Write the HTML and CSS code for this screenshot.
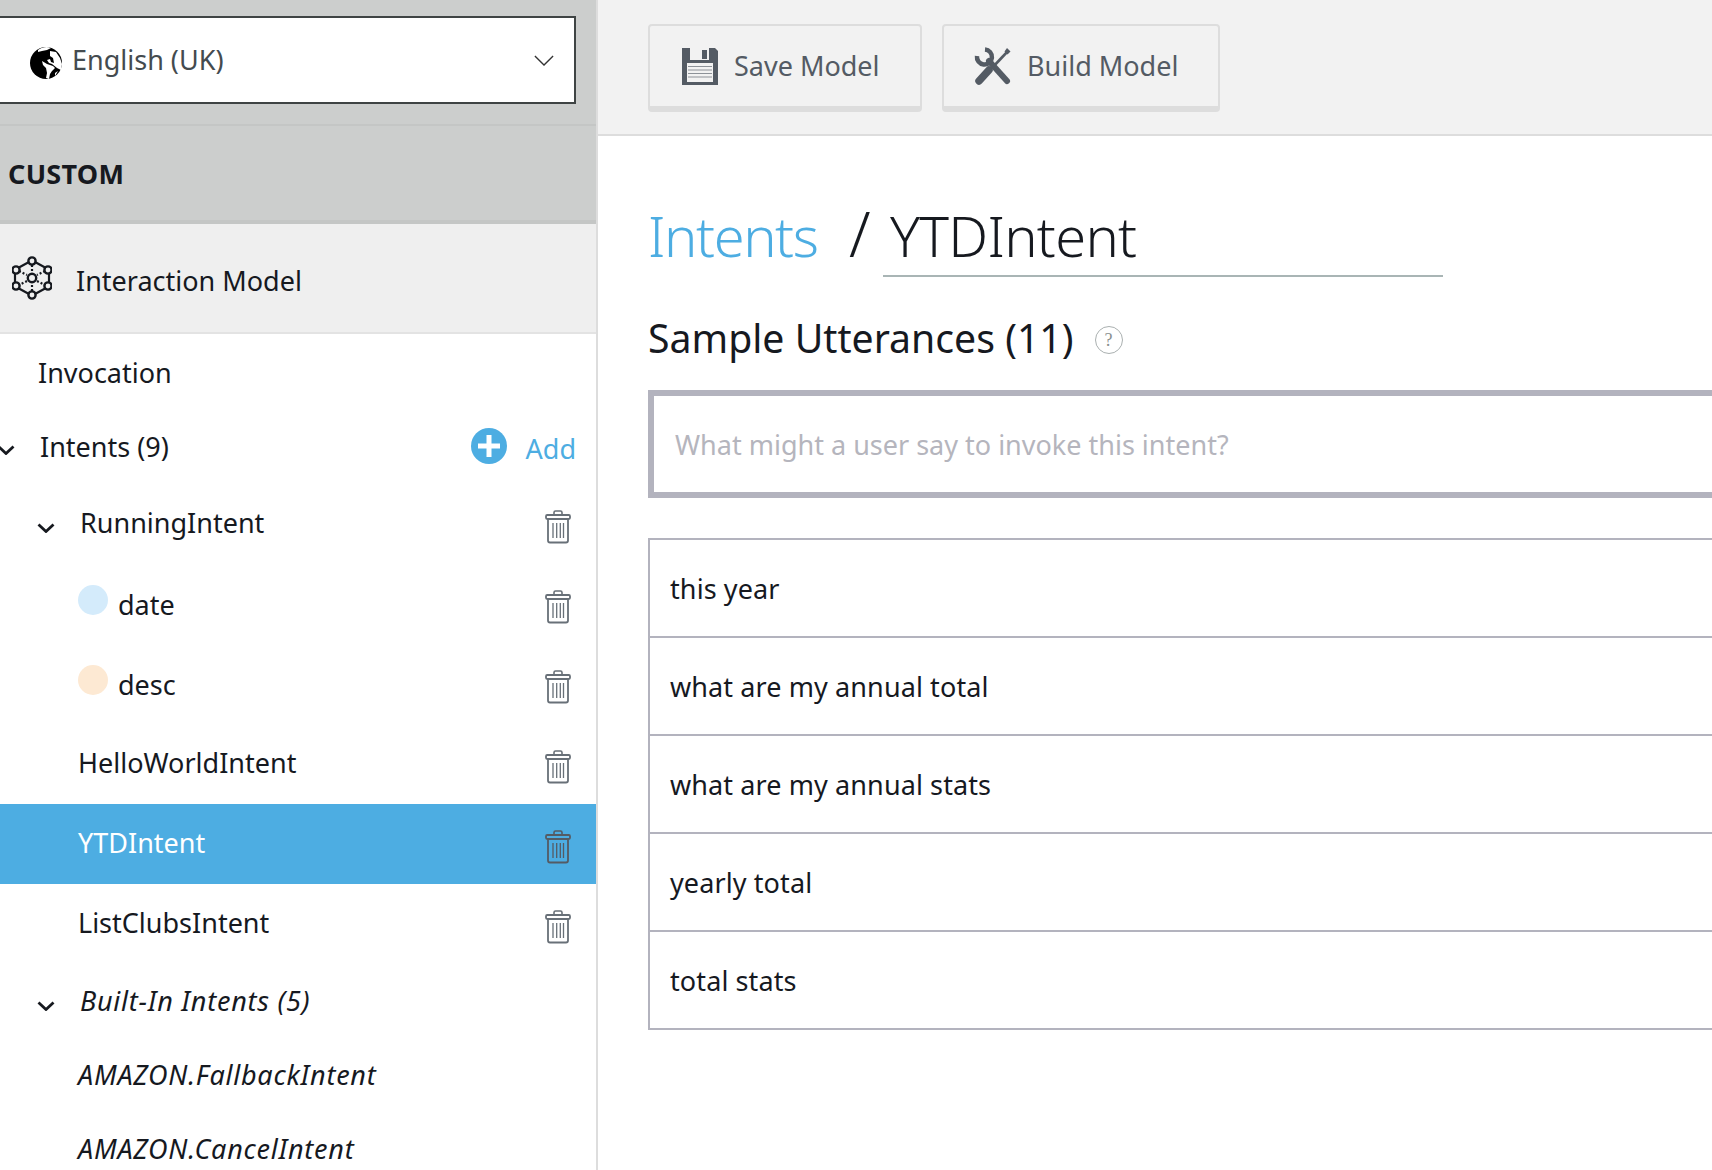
FILE: index.html
```html
<!DOCTYPE html>
<html lang="en">
<head>
<meta charset="utf-8">
<title>Interaction Model</title>
<link rel="stylesheet" href="styles.css">
</head>
<body>
<svg class="defs" width="0" height="0" aria-hidden="true">
  <symbol id="trash" viewBox="0 0 26 34">
    <path d="M9 5V2.500a1.500 1.500 0 0 1 1.500-1.500h5A1.500 1.500 0 0 1 17 2.500V5" fill="none" stroke="currentColor" stroke-width="1.600"/>
    <rect x="1" y="5" width="24" height="4" rx="1.200" fill="none" stroke="currentColor" stroke-width="1.800"/>
    <path d="M3 9v21.500a2 2 0 0 0 2 2h16a2 2 0 0 0 2-2V9" fill="none" stroke="currentColor" stroke-width="1.800"/>
    <path d="M8 13v15M11.700 13v15M15.300 13v15M18.500 13v15" fill="none" stroke="currentColor" stroke-width="1.300"/>
  </symbol>
  <symbol id="chev" viewBox="0 0 18 10">
    <path d="M1.500 1.500 9 8.500l7.500-7" fill="none" stroke="currentColor" stroke-width="2.800"/>
  </symbol>
</svg>
<div class="app">
  <aside class="sidebar">
    <div class="locale">
      <div class="select">
        <svg class="globe" viewBox="0 0 32 34">
          <circle cx="16" cy="17" r="16" fill="#000"/>
          <path d="M8 4c4-3 9-4 13-2l-4 2-5 1-4 1zM20 5l6 1 4 6 2 6-1 6-4-2-5-4-3-1-2-3 3-1 1 3 3 1-1-5-3-2zM12 15l5 3 6 2 2 2-3 3-2 3-1 5-3-1 1-5-1-5-3-3zM25 27l3-2-3 5z" fill="#fff"/>
        </svg>
        <span class="select-label">English (UK)</span>
        <svg class="select-chev" viewBox="0 0 22 12"><path d="M1 1l10 10L21 1" fill="none" stroke="#333" stroke-width="1.500"/></svg>
      </div>
    </div>
    <div class="custom">CUSTOM</div>
    <div class="model">
      <svg class="model-icon" viewBox="0 0 40 44">
        <g fill="none" stroke="#16191f">
          <path d="M23 6l11 6M37 18v8M34 32l-11 6M17 38L6 32M3 26v-8M6 12l11-6" stroke-width="2.200"/>
          <path d="M20 9v6M20 29v6M33 15l-8 4M15 25l-8 4M7 15l8 4M25 25l8 4" stroke-width="2.200" stroke-dasharray="2 2"/>
          <circle cx="20" cy="5" r="3.600" stroke-width="2.400"/>
          <circle cx="36" cy="14" r="3.600" stroke-width="2.400"/>
          <circle cx="36" cy="30" r="3.600" stroke-width="2.400"/>
          <circle cx="20" cy="39" r="3.600" stroke-width="2.400"/>
          <circle cx="4" cy="30" r="3.600" stroke-width="2.400"/>
          <circle cx="4" cy="14" r="3.600" stroke-width="2.400"/>
          <circle cx="20" cy="22" r="4.200" stroke-width="2.400"/>
        </g>
      </svg>
      <span>Interaction Model</span>
    </div>
    <nav class="tree">
      <div class="row row-invocation"><span>Invocation</span></div>
      <div class="row row-intents">
        <svg class="chev chev-root"><use href="#chev"/></svg>
        <span class="grow">Intents (9)</span>
        <svg class="add-icon" viewBox="0 0 36 36"><circle cx="18" cy="18" r="18" fill="#4dade2"/><path d="M18 7v22M7 18h22" stroke="#fff" stroke-width="5"/></svg>
        <span class="add-label">Add</span>
      </div>
      <div class="row row-item row-parent">
        <svg class="chev"><use href="#chev"/></svg>
        <span class="grow">RunningIntent</span>
        <svg class="trash"><use href="#trash"/></svg>
      </div>
      <div class="row row-item row-slot">
        <i class="dot dot-blue"></i>
        <span class="grow">date</span>
        <svg class="trash"><use href="#trash"/></svg>
      </div>
      <div class="row row-item row-slot">
        <i class="dot dot-peach"></i>
        <span class="grow">desc</span>
        <svg class="trash"><use href="#trash"/></svg>
      </div>
      <div class="row row-item row-leaf">
        <span class="grow">HelloWorldIntent</span>
        <svg class="trash"><use href="#trash"/></svg>
      </div>
      <div class="row row-item row-leaf row-active">
        <span class="grow">YTDIntent</span>
        <svg class="trash"><use href="#trash"/></svg>
      </div>
      <div class="row row-item row-leaf">
        <span class="grow">ListClubsIntent</span>
        <svg class="trash"><use href="#trash"/></svg>
      </div>
      <div class="row row-builtin row-parent">
        <svg class="chev"><use href="#chev"/></svg>
        <span class="grow">Built-In Intents (5)</span>
      </div>
      <div class="row row-builtin row-leaf"><span>AMAZON.FallbackIntent</span></div>
      <div class="row row-builtin row-leaf"><span>AMAZON.CancelIntent</span></div>
    </nav>
  </aside>
  <main class="main">
    <header class="toolbar">
      <button class="btn btn-save" type="button">
        <svg class="btn-icon-save" viewBox="0 0 36 38">
          <path d="M0 1h33l3 3v34H0z" fill="#545b64"/>
          <rect x="8" y="1" width="19" height="12" fill="#f2f2f2"/>
          <rect x="20" y="3" width="5" height="9" fill="#545b64"/>
          <rect x="5" y="16" width="26" height="19" fill="#f2f2f2"/>
          <path d="M6 19.500h24M6 23h24M6 26.500h24M6 30h24" stroke="#8d9298" stroke-width="1.200"/>
        </svg>
        <span>Save Model</span>
      </button>
      <button class="btn btn-build" type="button">
        <svg class="btn-icon-build" viewBox="0 0 38 40">
          <path d="M34 5 18 22" stroke="#545b64" stroke-width="2.600" fill="none"/>
          <path d="M33 2l3.500 3.500-3 3-3-3z" fill="#545b64"/>
          <path d="M15 24 5 35" stroke="#545b64" stroke-width="7.500" stroke-linecap="round" fill="none"/>
          <path d="M15 15 33 35" stroke="#545b64" stroke-width="6" stroke-linecap="round" fill="none"/>
          <path d="M11 3.500A7.500 7.500 0 1 1 3 10" stroke="#545b64" stroke-width="4.500" fill="none"/>
        </svg>
        <span>Build Model</span>
      </button>
    </header>
    <section class="content">
      <div class="title-row">
        <span class="crumb">Intents</span>
        <span class="slash">/</span>
        <span class="intent-name"><span class="intent-text">YTDIntent</span></span>
      </div>
      <div class="heading-row">
        <h2 class="heading">Sample Utterances (11)</h2>
        <span class="help">?</span>
      </div>
      <div class="utter-input">What might a user say to invoke this intent?</div>
      <ul class="utter-list">
        <li>this year</li>
        <li>what are my annual total</li>
        <li>what are my annual stats</li>
        <li>yearly total</li>
        <li>total stats</li>
      </ul>
    </section>
  </main>
</div>
</body>
</html>
```
FILE: styles.css
```css
* { box-sizing: border-box; }
html, body { margin: 0; padding: 0; height: 1170px; overflow: hidden; }
body {
  font-family: "Noto Sans", "Open Sans", sans-serif;
  font-size: 27px;
  color: #16191f;
  background: #fff;
}
.defs { position: absolute; }
.app { display: flex; height: 1170px; }

/* Sidebar */
.sidebar {
  width: 598px;
  flex: none;
  border-right: 2px solid #ddd;
  overflow: hidden;
}
.locale {
  height: 126px;
  padding-top: 16px;
  background: #cccecd;
  border-bottom: 2px solid #c4c6c5;
}
.select {
  width: 578px;
  height: 88px;
  margin-left: -2px;
  border: 2px solid #3f4444;
  background: #fff;
  display: flex;
  align-items: center;
  padding: 0 20px 0 30px;
  color: #444b4f;
}
.globe { width: 32px; height: 34px; margin-top: 6px; margin-right: 10px; flex: none; }
.select-label { flex: 1; margin-top: -2px; }
.select-chev { width: 20px; height: 11px; }
.custom {
  height: 98px;
  background: #cccecd;
  border-bottom: 4px solid #c4c6c5;
  display: flex;
  align-items: center;
  padding-left: 8px;
  font-weight: 700;
  letter-spacing: 0.3px;
}
.model {
  height: 110px;
  background: #efefef;
  border-bottom: 2px solid #e3e3e3;
  display: flex;
  align-items: center;
  padding: 4px 0 0 12px;
}
.model-icon { width: 40px; height: 44px; margin-right: 24px; margin-top: -4px; flex: none; }
.tree { display: flex; flex-direction: column; }
.row { display: flex; align-items: center; }
.grow { flex: 1; }
.row-invocation { height: 74px; padding: 2px 0 0 38px; }
.row-intents { height: 76px; padding-right: 20px; }
.chev { width: 18px; height: 10px; flex: none; color: #16191f; margin: 8px 25px 0 37px; }
.chev-root { margin: 8px 25px 0 -3px; }
.add-icon { width: 36px; height: 36px; flex: none; margin-right: 19px; margin-left: -1px; }
.add-label { color: #4dade2; margin-top: 4px; }
.row-item { height: 80px; padding-right: 25px; }
.row-item.row-leaf .grow, .row-item.row-parent .grow { margin-top: -4px; }
.row-leaf { padding-left: 78px; }
.row-slot { padding-left: 78px; }
.row-active { background: #4dade2; color: #fff; }
.row-active .trash { color: #545b64; }
.trash { width: 26px; height: 34px; flex: none; color: #687078; margin-top: 6px; }
.dot { width: 30px; height: 30px; border-radius: 50%; flex: none; margin: -9px 10px 0 0; }
.dot-blue { background: #d4ebfb; }
.dot-peach { background: #fde9d3; }
.row-builtin { height: 74px; font-style: italic; letter-spacing: 0.75px; padding-bottom: 2px; }
.row-builtin .chev { margin-top: 12px; }

/* Main */
.main { flex: 1; min-width: 0; overflow: hidden; }
.toolbar {
  height: 136px;
  background: #f2f2f2;
  border-bottom: 2px solid #ddd;
  display: flex;
  gap: 20px;
  padding: 24px 0 0 50px;
  align-items: flex-start;
}
.btn {
  height: 88px;
  border: 2px solid #ddd;
  border-bottom-width: 6px;
  border-radius: 4px;
  background: #f2f2f2;
  display: flex;
  align-items: center;
  font: inherit;
  color: #545b64;
  padding: 0;
}
.btn span { margin-top: -2px; }
.btn-save { width: 274px; padding-left: 32px; }
.btn-build { width: 278px; padding-left: 30px; }
.btn-icon-save { width: 36px; height: 38px; margin-right: 16px; flex: none; }
.btn-icon-build { width: 38px; height: 40px; margin-right: 15px; flex: none; }
.content { padding: 0 0 0 50px; }
.title-row {
  display: flex;
  align-items: baseline;
  height: 140px;
  padding-top: 58px;
  font-size: 56px;
  font-weight: 300;
  line-height: 78px;
}
.crumb { color: #4dade2; width: 201px; letter-spacing: -1.4px; }
.slash { width: 34px; font-size: 62px; }
.intent-name {
  width: 560px;
  height: 81px;
  padding-left: 7px;
  border-bottom: 2px solid #a9b5b5;
  letter-spacing: -0.7px;
}
.heading-row { display: flex; align-items: center; height: 70px; margin-top: 26px; }
.heading { margin: 0; font-size: 39.2px; font-weight: 400; }
.help {
  width: 28px;
  height: 28px;
  margin-left: 21px;
  margin-top: 6px;
  border: 1.5px solid #aab0b0;
  border-radius: 50%;
  display: flex;
  align-items: center;
  justify-content: center;
  font-family: "Liberation Serif", serif;
  font-size: 18px;
  color: #8a8f8f;
}
.utter-input {
  height: 108px;
  margin: 18px -20px 0 0;
  border: 6px solid #b3b3be;
  display: flex;
  align-items: center;
  padding-left: 21px;
  color: #b5b5bd;
}
.utter-list {
  list-style: none;
  margin: 40px -20px 0 0;
  padding: 0;
  border: 2px solid #b3b3be;
  border-width: 2px 2px 0;
  letter-spacing: 0.1px;
}
.utter-list li {
  height: 98px;
  display: flex;
  align-items: center;
  padding-left: 20px;
  border-bottom: 2px solid #b3b3be;
}
```
